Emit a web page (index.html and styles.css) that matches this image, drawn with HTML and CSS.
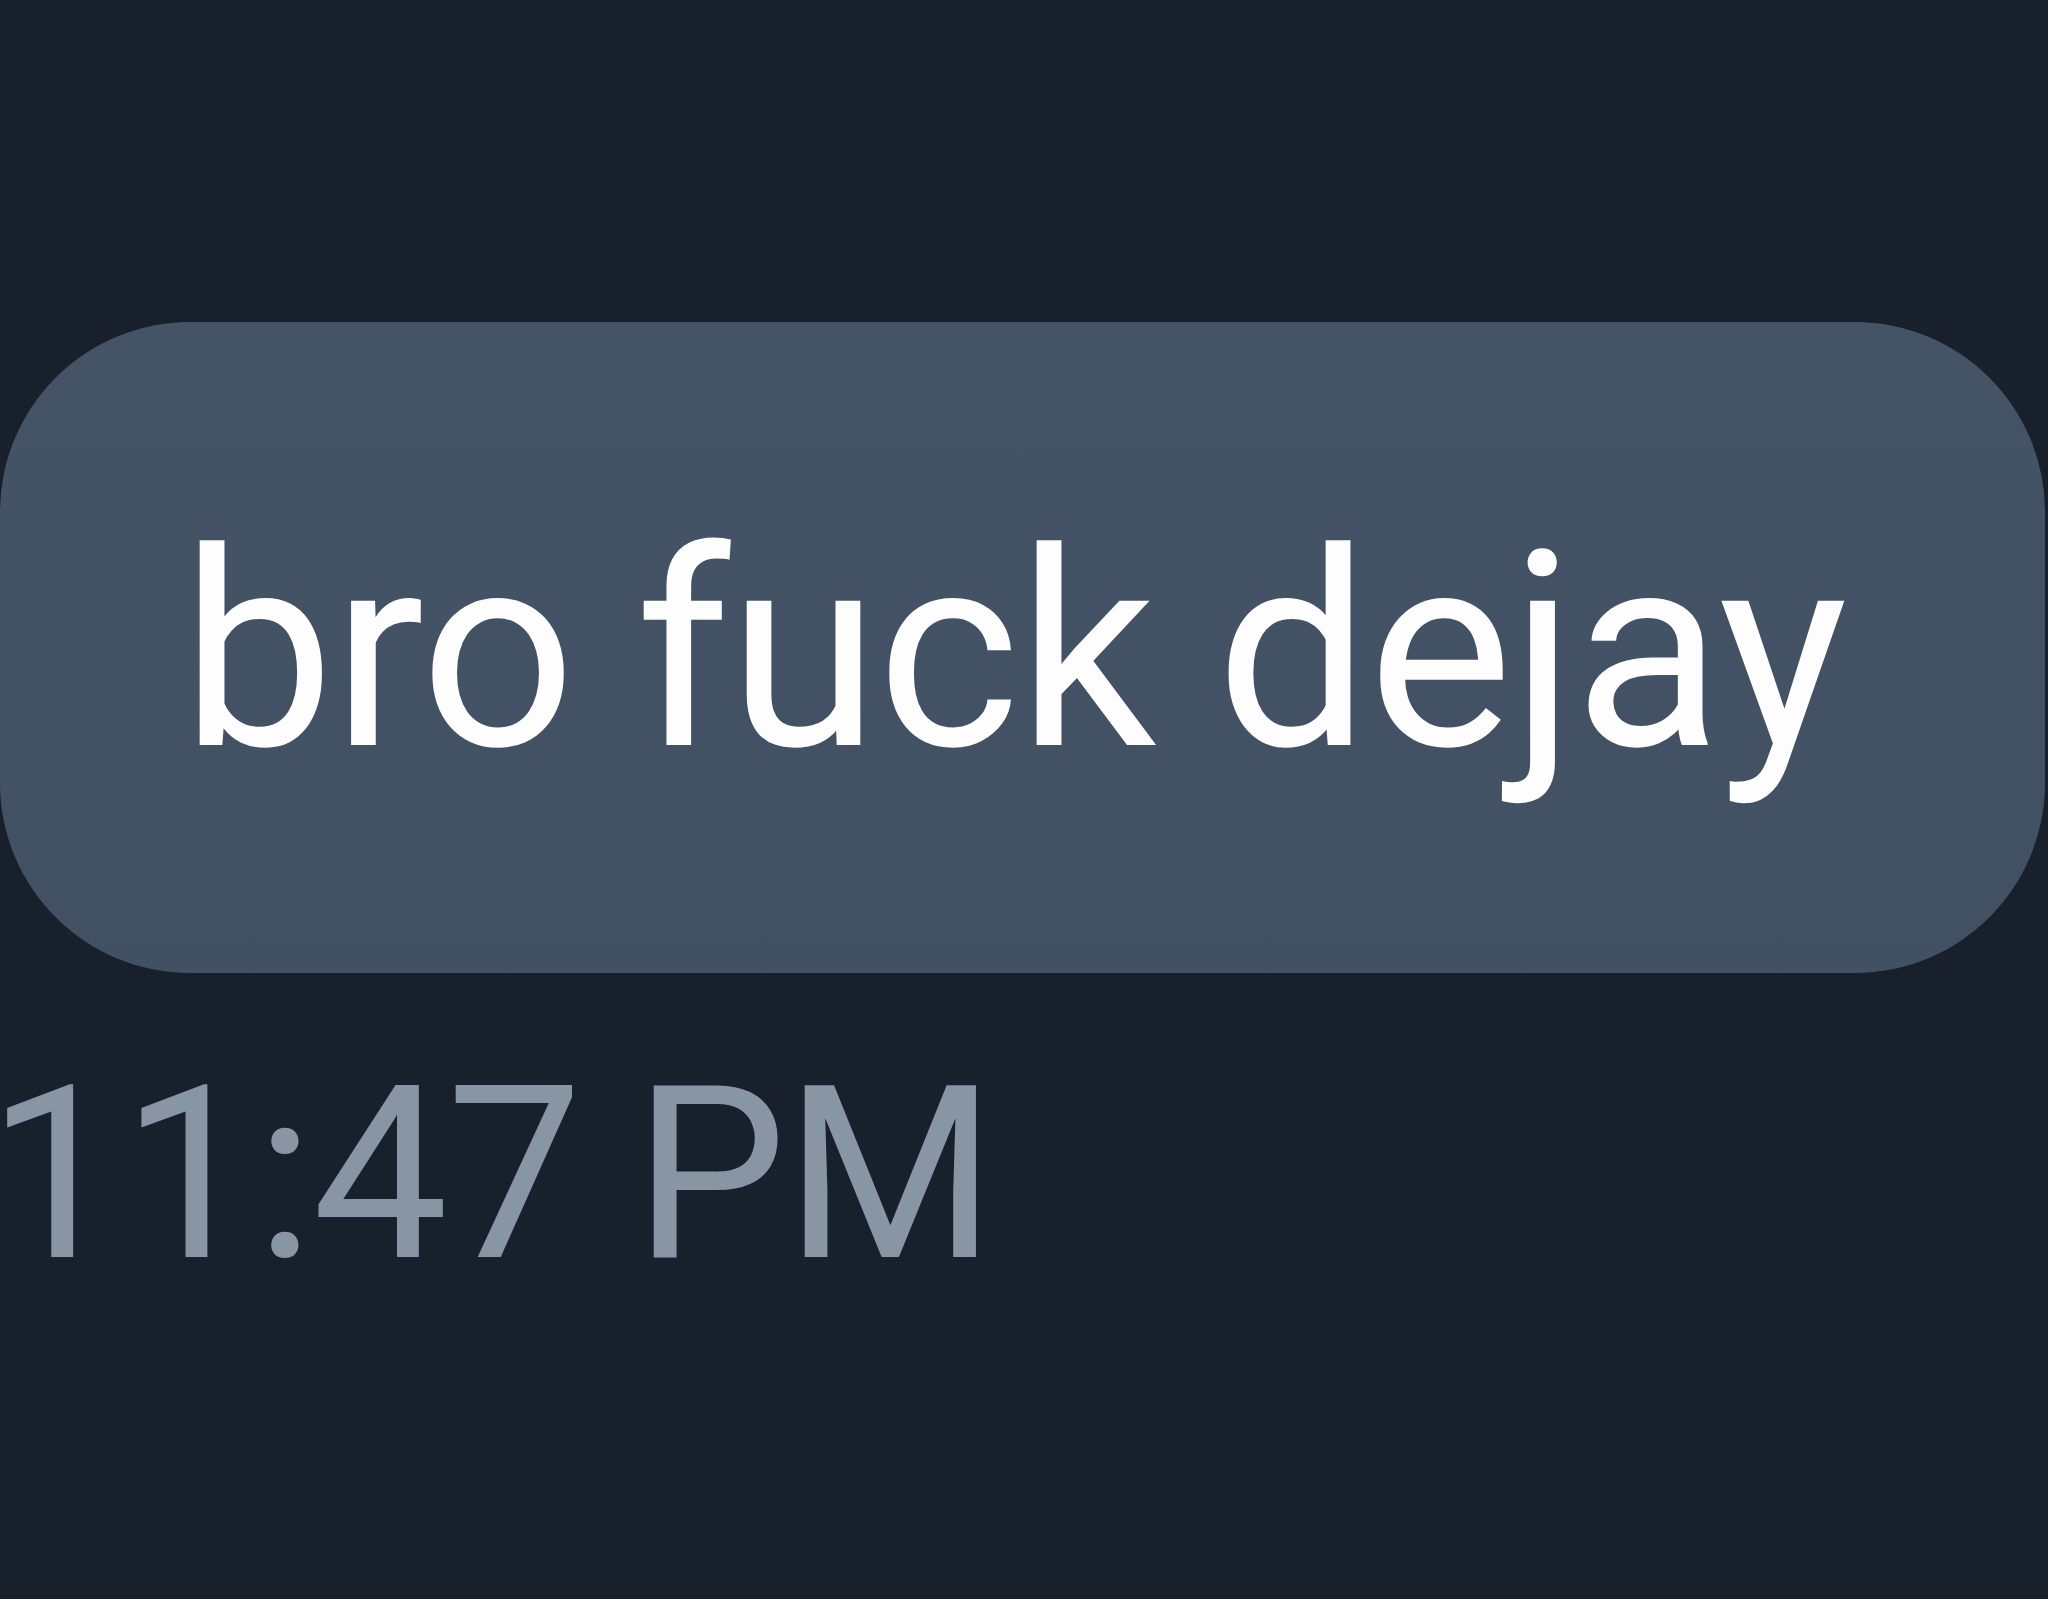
FILE: index.html
```html
<!DOCTYPE html>
<html>
<head>
<meta charset="utf-8">
<link rel="stylesheet" href="styles.css">
</head>
<body>
<div class="chat">
  <div class="bubble"><span class="msg">bro fuck dejay</span></div>
  <div class="time">11:47 PM</div>
</div>
</body>
</html>
```
FILE: styles.css
```css
html, body {
  margin: 0;
  padding: 0;
  background: #18202b;
  width: 2048px;
  height: 1599px;
  overflow: hidden;
}
.chat {
  padding-top: 322px;
  display: flex;
  flex-direction: column;
  align-items: flex-start;
  font-family: Roboto, "Noto Sans", sans-serif;
}
.bubble {
  box-sizing: border-box;
  width: 2045px;
  height: 651px;
  border-radius: 190px;
  background: linear-gradient(180deg, #445466 0%, #415163 100%);
  display: flex;
  align-items: center;
  padding-left: 181px;
}
.msg {
  color: #fdfdfd;
  font-size: 273px;
  line-height: 1;
  letter-spacing: -2px;
  word-spacing: -4px;
  white-space: nowrap;
  position: relative;
  top: 5px;
}
.time {
  margin-top: 80px;
  margin-left: -13px;
  color: #8795a4;
  font-size: 242px;
  line-height: 1;
  letter-spacing: -1.8px;
  word-spacing: -5px;
  white-space: nowrap;
}
```
